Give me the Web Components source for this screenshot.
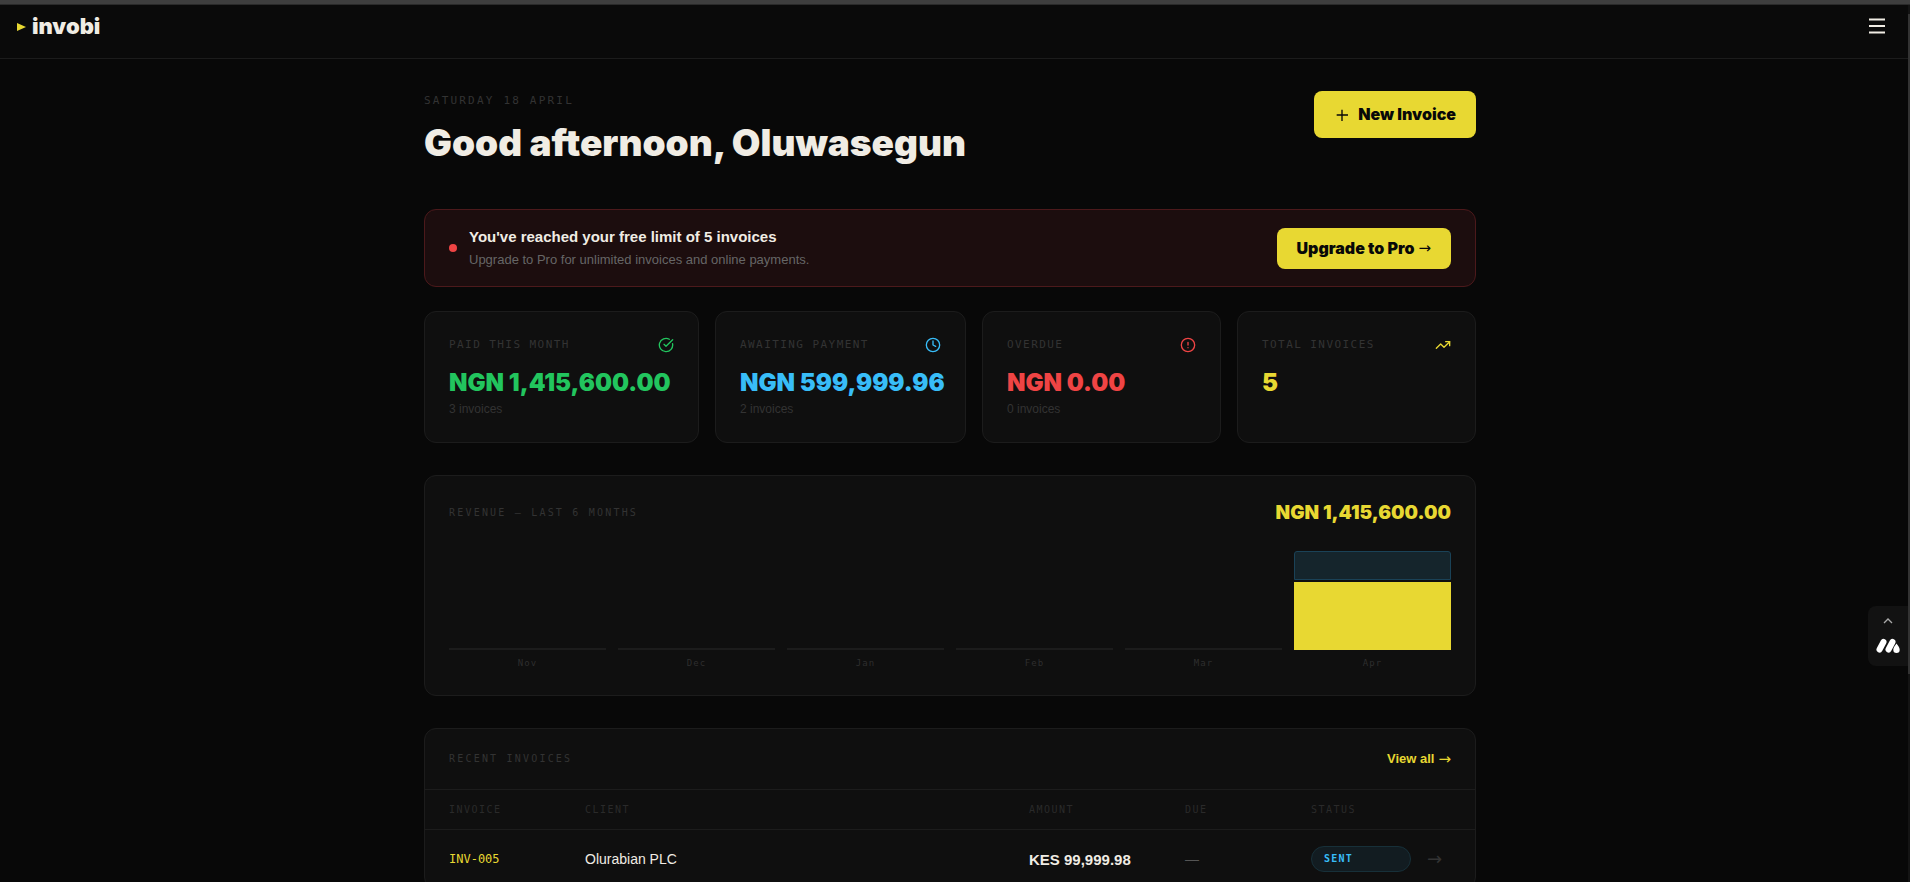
<!DOCTYPE html>
<html lang="en">
<head>
<meta charset="utf-8">
<meta name="viewport" content="width=device-width, initial-scale=1">
<title>invobi</title>
<style>
	html {
		background: #080808;
		scrollbar-width: none;
	}
	body {
		--card: #0f0f0f;
		--line: #1c1c1c;
		--muted: #333333;
		--yellow: #e8d832;
		--cream: #f0ece4;
		--red: #ef4444;
		--green: #22c55e;
		--blue: #38bdf8;
		--sans: "Liberation Sans", Arial, sans-serif;
		--black: Inter, "Arial Black", sans-serif;
		--mono: "DejaVu Sans Mono", monospace;
		--arrow: "DejaVu Sans", sans-serif;
		margin: 0;
		color: var(--cream);
		font-family: var(--sans);
	}
	main {
		box-sizing: border-box;
		max-width: 1100px;
		margin: 0 auto;
		padding: 32px 24px 40px;
	}
	.page {
		padding-right: 10px;
	}
	.stats {
		display: grid;
		grid-template-columns: minmax(0, 275fr) minmax(0, 251fr) minmax(0, 239fr) minmax(0, 239fr);
		gap: 16px;
		margin: 24px 0 32px;
	}
	@media (max-width: 1000px) {
		.stats {
			grid-template-columns: 1fr 1fr;
		}
	}
</style>
</head>
<body>
	<app-header></app-header>
	<div class="page">
		<main>
			<page-heading date="Saturday 18 April" heading="Good afternoon, Oluwasegun">
				<action-button size="large">
					<svg slot="icon" width="16" height="16" viewBox="0 0 24 24" fill="none" stroke="#080808" stroke-width="2"><path d="M4 12h17M12 4v17"/></svg>
					New Invoice
				</action-button>
			</page-heading>
			<limit-banner>
				<span slot="title">You've reached your free limit of 5 invoices</span>
				<span slot="text">Upgrade to Pro for unlimited invoices and online payments.</span>
				<action-button slot="action" arrow>Upgrade to Pro</action-button>
			</limit-banner>
			<section class="stats">
				<stat-card label="Paid this month" value="NGN 1,415,600.00" note="3 invoices" color="var(--green)" icon="check"></stat-card>
				<stat-card label="Awaiting payment" value="NGN 599,999.96" note="2 invoices" color="var(--blue)" icon="clock"></stat-card>
				<stat-card label="Overdue" value="NGN 0.00" note="0 invoices" color="var(--red)" icon="alert"></stat-card>
				<stat-card label="Total invoices" value="5" note="" color="var(--yellow)" icon="trend"></stat-card>
			</section>
			<revenue-chart total="NGN 1,415,600.00"></revenue-chart>
			<recent-invoices></recent-invoices>
		</main>
	</div>
	<side-widget></side-widget>
	<scroll-strip></scroll-strip>

<script>
class AppHeader extends HTMLElement {
	constructor(){
		super();
		this.attachShadow({mode: 'open'}).innerHTML = `
			<style>
				:host {
					display: block;
					background: #0a0a0a;
					border-top: 4px solid #3e3e3e;
					border-bottom: 1px solid #1c1c1c;
				}
				header {
					display: flex;
					justify-content: space-between;
					align-items: center;
					padding: 8px 21px 18px 17px;
					border-top: 1px solid #2a2a2a;
				}
				a {
					display: flex;
					align-items: center;
					gap: 6px;
					color: var(--cream);
					font: 900 22px/27px var(--black);
					text-decoration: none;
				}
				button {
					display: flex;
					padding: 0 0 2px;
					border: 0;
					background: none;
					color: var(--cream);
				}
			</style>
			<header>
				<a href="#">
					<svg width="9" height="8" viewBox="0 0 9 8"><path d="M0 0l9 4-9 4z" fill="#e8d832"/></svg>
					<span>invobi</span>
				</a>
				<button aria-label="Menu">
					<svg width="24" height="24" viewBox="0 0 24 24" stroke="currentColor" stroke-width="2"><path d="M4 5.5h16M4 12h16M4 18.5h16"/></svg>
				</button>
			</header>
		`;
	}
}

class ActionButton extends HTMLElement {
	constructor(){
		super();
		this.attachShadow({mode: 'open'}).innerHTML = `
			<style>
				:host {
					display: block;
					flex: none;
				}
				button {
					display: flex;
					align-items: center;
					gap: 4px;
					padding: 12px 20px;
					border: 0;
					border-radius: 8px;
					background: var(--yellow);
					color: #080808;
					font: 900 16px/17px var(--black);
					white-space: nowrap;
				}
				:host([size=large]) button {
					gap: 8px;
					padding: 14px 20px;
					line-height: 19px;
				}
				i {
					font: 15px/17px var(--arrow);
				}
			</style>
			<button><slot name="icon"></slot><span><slot></slot></span>${this.hasAttribute('arrow') ? '<i>→</i>' : ''}</button>
		`;
	}
}

class PageHeading extends HTMLElement {
	connectedCallback(){
		this.attachShadow({mode: 'open'}).innerHTML = `
			<style>
				:host {
					display: flex;
					justify-content: space-between;
					align-items: flex-start;
					margin-bottom: 44px;
				}
				p {
					margin: 0 0 10px;
					color: var(--muted);
					font: 11px/20px var(--mono);
					letter-spacing: 0.2em;
					text-transform: uppercase;
				}
				h1 {
					margin: 0;
					font: 900 37px/44px var(--black);
				}
			</style>
			<div>
				<p>${this.getAttribute('date')}</p>
				<h1>${this.getAttribute('heading')}</h1>
			</div>
			<slot></slot>
		`;
	}
}

class LimitBanner extends HTMLElement {
	constructor(){
		super();
		this.attachShadow({mode: 'open'}).innerHTML = `
			<style>
				:host {
					display: flex;
					align-items: center;
					gap: 12px;
					box-sizing: border-box;
					min-height: 78px;
					padding: 16px 24px;
					border: 1px solid #4c191b;
					border-radius: 12px;
					background: #1c0d0e;
				}
				.dot {
					flex: none;
					width: 8px;
					height: 8px;
					border-radius: 50%;
					background: var(--red);
				}
				.body {
					flex: 1;
				}
				p {
					margin: 0;
					color: #666666;
					font-size: 13px;
					line-height: 20px;
				}
				.title {
					margin-bottom: 2px;
					color: var(--cream);
					font-size: 15px;
					line-height: 22px;
					font-weight: bold;
				}
			</style>
			<span class="dot"></span>
			<div class="body">
				<p class="title"><slot name="title"></slot></p>
				<p><slot name="text"></slot></p>
			</div>
			<slot name="action"></slot>
		`;
	}
}

const icons = {
	check: '<path d="M21.8 10A10 10 0 1 1 17 3.34"/><path d="m9 11 3 3L22 4"/>',
	clock: '<circle cx="12" cy="12" r="10"/><path d="M12 6v6l4 2"/>',
	alert: '<circle cx="12" cy="12" r="10"/><path d="M12 8v4M12 16h.01"/>',
	trend: '<path d="m22 7-8.5 8.5-5-5L2 17"/><path d="M16 7h6v6"/>'
};

class StatCard extends HTMLElement {
	connectedCallback(){
		this.attachShadow({mode: 'open'}).innerHTML = `
			<style>
				:host {
					display: block;
					box-sizing: border-box;
					min-height: 132px;
					padding: 24px;
					border: 1px solid var(--line);
					border-radius: 12px;
					background: var(--card);
				}
				.top {
					display: flex;
					justify-content: space-between;
					align-items: center;
					height: 18px;
					margin-bottom: 14px;
				}
				.label {
					color: var(--muted);
					font: 11px/18px var(--mono);
					letter-spacing: 0.13em;
					text-transform: uppercase;
				}
				.top, .value {
					color: ${this.getAttribute('color')};
				}
				.value {
					font: 900 24px/30px var(--black);
					white-space: nowrap;
				}
				.note {
					margin-top: 2px;
					color: var(--muted);
					font-size: 12px;
					line-height: 18px;
				}
			</style>
			<div class="top">
				<span class="label">${this.getAttribute('label')}</span>
				<svg width="16" height="16" viewBox="0 0 24 24" fill="none" stroke="currentColor" stroke-width="2" stroke-linecap="round" stroke-linejoin="round">${icons[this.getAttribute('icon')]}</svg>
			</div>
			<div class="value">${this.getAttribute('value')}</div>
			<div class="note">${this.getAttribute('note')}</div>
		`;
	}
}

class RevenueChart extends HTMLElement {
	connectedCallback(){
		const months = [['Nov'], ['Dec'], ['Jan'], ['Feb'], ['Mar'], ['Apr', 68, 29]];
		this.attachShadow({mode: 'open'}).innerHTML = `
			<style>
				:host {
					display: block;
					margin-bottom: 32px;
					padding: 24px;
					border: 1px solid var(--line);
					border-radius: 12px;
					background: var(--card);
				}
				.top {
					display: flex;
					justify-content: space-between;
					align-items: center;
					height: 26px;
					margin-bottom: 24px;
				}
				h2 {
					margin: 0;
					color: var(--muted);
					font: 10px/16px var(--mono);
					letter-spacing: 0.22em;
					text-transform: uppercase;
				}
				.total {
					color: var(--yellow);
					font: 900 19px/28px var(--black);
				}
				.bars {
					display: grid;
					grid-template-columns: repeat(6, 1fr);
					gap: 12px;
				}
				.bar {
					display: flex;
					flex-direction: column;
					justify-content: flex-end;
					gap: 2px;
					height: 100px;
				}
				.empty {
					height: 2px;
					background: var(--line);
				}
				.pending {
					box-sizing: border-box;
					border: 1px solid #1a4257;
					border-radius: 3px 3px 0 0;
					background: #15252c;
				}
				.paid {
					background: var(--yellow);
				}
				.month {
					margin-top: 6px;
					color: #2e2e2e;
					font: 9px/15px var(--mono);
					letter-spacing: 0.12em;
					text-align: center;
				}
			</style>
			<div class="top">
				<h2>Revenue — last 6 months</h2>
				<span class="total">${this.getAttribute('total')}</span>
			</div>
			<div class="bars">
				${months.map(([name, paid, pending]) => `
					<div>
						<div class="bar">
							${paid ? `<div class="pending" style="height: ${pending}px"></div><div class="paid" style="height: ${paid}px"></div>` : '<div class="empty"></div>'}
						</div>
						<div class="month">${name}</div>
					</div>
				`).join('')}
			</div>
		`;
	}
}

class RecentInvoices extends HTMLElement {
	constructor(){
		super();
		this.attachShadow({mode: 'open'}).innerHTML = `
			<style>
				:host {
					display: block;
					border: 1px solid var(--line);
					border-radius: 12px;
					background: var(--card);
				}
				.top {
					display: flex;
					justify-content: space-between;
					align-items: center;
					height: 60px;
					padding: 0 24px;
					border-bottom: 1px solid var(--line);
				}
				h2 {
					margin: 0;
					color: var(--muted);
					font: 10px/16px var(--mono);
					letter-spacing: 0.22em;
					text-transform: uppercase;
				}
				a {
					color: inherit;
					text-decoration: none;
				}
				.all {
					display: flex;
					align-items: center;
					gap: 4px;
					color: var(--yellow);
					font-size: 13px;
					line-height: 16px;
					font-weight: bold;
				}
				i {
					font: 15px/16px var(--arrow);
				}
				table {
					width: 100%;
					table-layout: fixed;
					border-collapse: separate;
					border-spacing: 0;
				}
				th, td {
					box-sizing: border-box;
					padding: 0 16px 0 0;
					text-align: left;
					white-space: nowrap;
				}
				th:first-child, td:first-child {
					padding-left: 24px;
				}
				th {
					height: 40px;
					border-bottom: 1px solid var(--line);
					color: #2a2a2a;
					font: 10px/16px var(--mono);
					letter-spacing: 0.15em;
					text-transform: uppercase;
				}
				td {
					height: 58px;
					font-size: 14px;
				}
				.number {
					color: var(--yellow);
					font: 12px/18px var(--mono);
				}
				.amount {
					font-size: 15px;
					font-weight: bold;
				}
				.due {
					color: #555555;
				}
				.status {
					display: block;
					box-sizing: border-box;
					padding: 4px 12px;
					border: 1px solid #173039;
					border-radius: 13px;
					background: #121c21;
					color: var(--blue);
					font: bold 10px/16px var(--mono);
					letter-spacing: 0.12em;
				}
				td:last-child {
					padding: 0;
				}
				.open {
					color: var(--muted);
				}
				.open i {
					font-size: 18px;
				}
			</style>
			<div class="top">
				<h2>Recent invoices</h2>
				<a class="all" href="#">View all <i>→</i></a>
			</div>
			<table>
				<colgroup>
					<col style="width: 160px"><col><col style="width: 156px"><col style="width: 126px"><col style="width: 116px"><col style="width: 48px">
				</colgroup>
				<thead>
					<tr><th>Invoice</th><th>Client</th><th>Amount</th><th>Due</th><th>Status</th><th></th></tr>
				</thead>
				<tbody>
					<tr>
						<td class="number">INV-005</td>
						<td>Olurabian PLC</td>
						<td class="amount">KES 99,999.98</td>
						<td class="due">—</td>
						<td><span class="status">SENT</span></td>
						<td><a class="open" href="#"><i>→</i></a></td>
					</tr>
				</tbody>
			</table>
		`;
	}
}

// Floating tab on the right edge of the window
class SideWidget extends HTMLElement {
	constructor(){
		super();
		this.attachShadow({mode: 'open'}).innerHTML = `
			<style>
				:host {
					position: fixed;
					top: 606px;
					right: 2px;
				}
				button {
					display: flex;
					flex-direction: column;
					align-items: center;
					justify-content: space-between;
					box-sizing: border-box;
					width: 40px;
					height: 60px;
					padding: 10px 0 12px;
					border: 0;
					border-radius: 8px 0 0 8px;
					background: #121212;
				}
			</style>
			<button aria-label="Open widget">
				<svg width="10" height="10" viewBox="0 0 10 10" fill="none" stroke="#aaaaaa" stroke-width="1.3"><path d="M1 7l4-4 4 4"/></svg>
				<svg width="24" height="16" viewBox="0 0 24 16">
					<path d="M3.5 11.5L7.5 4M12.5 11.5L16.5 4" stroke="#ffffff" stroke-width="6" stroke-linecap="round"/>
					<path d="M20.5 5.5c1.4 2.2 3.2 4 3.2 6.2a3.2 3.2 0 0 1-6.4 0c0-2.2 1.8-4 3.2-6.2z" fill="#ffffff"/>
				</svg>
			</button>
		`;
	}
}

class ScrollStrip extends HTMLElement {
	constructor(){
		super();
		this.attachShadow({mode: 'open'}).innerHTML = `
			<style>
				:host {
					position: fixed;
					top: 5px;
					right: 0;
					bottom: 0;
					width: 2px;
					padding-top: 9px;
					background: #141414;
				}
				div {
					height: 76%;
					background: #333333;
				}
			</style>
			<div></div>
		`;
	}
}

customElements.define('app-header', AppHeader);
customElements.define('action-button', ActionButton);
customElements.define('page-heading', PageHeading);
customElements.define('limit-banner', LimitBanner);
customElements.define('stat-card', StatCard);
customElements.define('revenue-chart', RevenueChart);
customElements.define('recent-invoices', RecentInvoices);
customElements.define('side-widget', SideWidget);
customElements.define('scroll-strip', ScrollStrip);
</script>
</body>
</html>
